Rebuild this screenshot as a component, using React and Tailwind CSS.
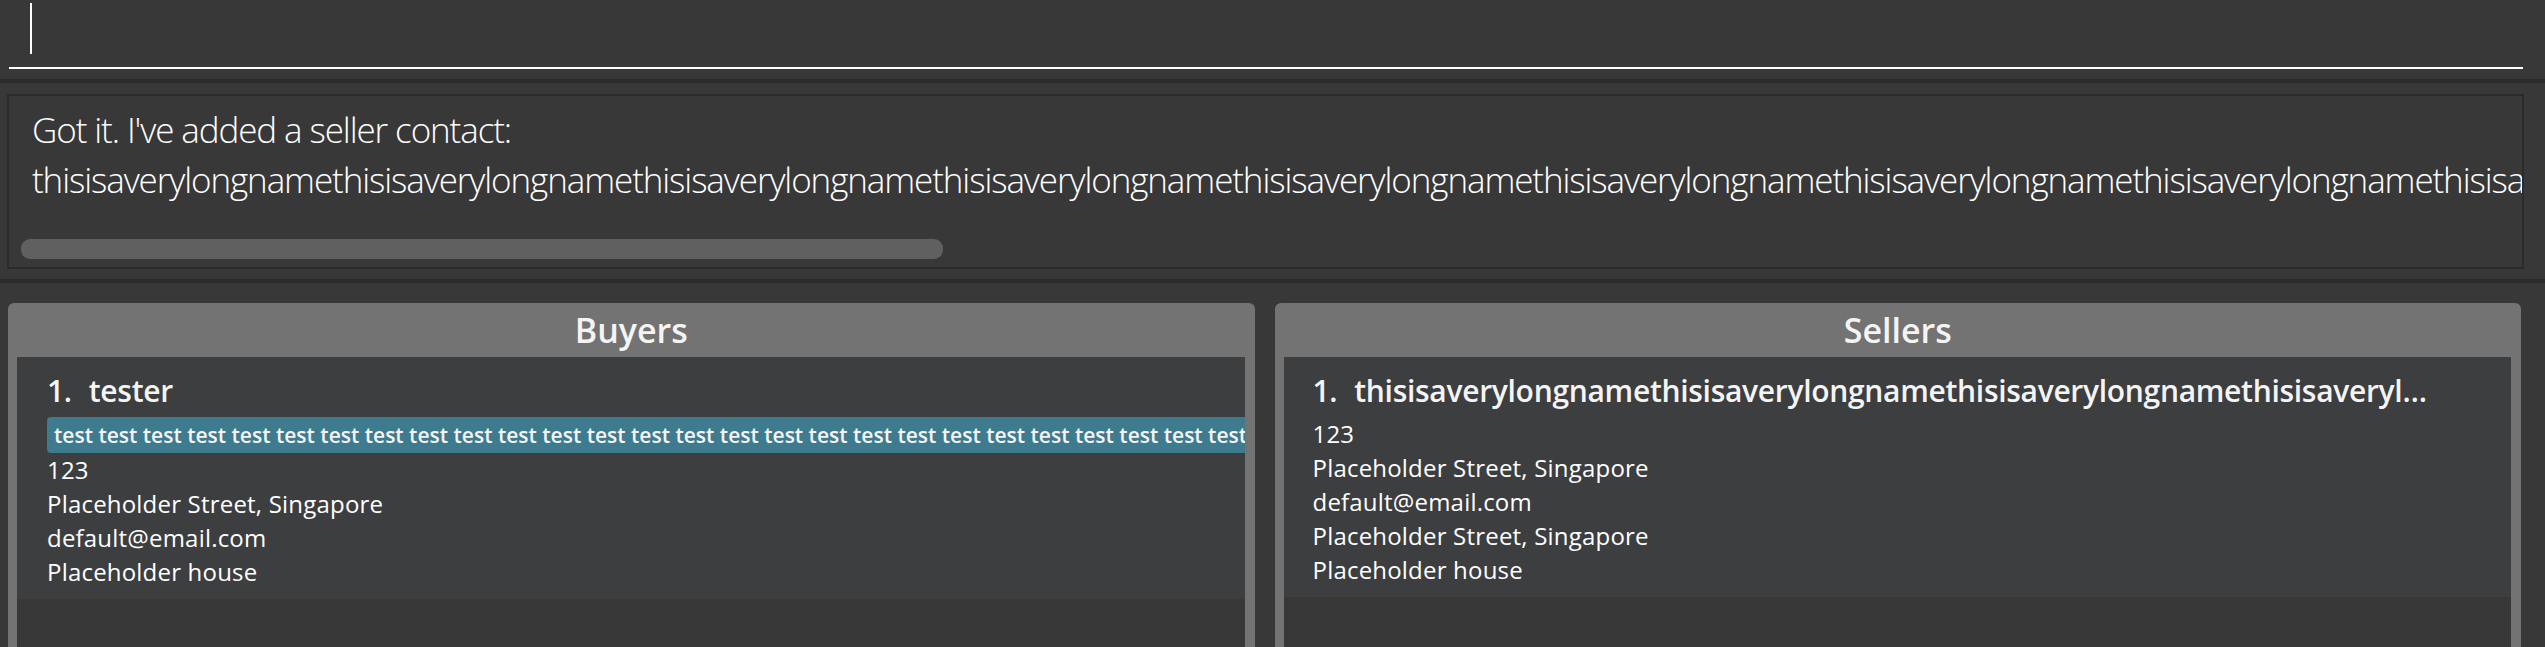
import React from "react";

const longName = "thisisaverylongname".repeat(12);
const tags = Array(40).fill("test").join(" ");

const Panel = ({ title, children }) => (
  <div className="flex-1 min-w-0 flex flex-col bg-[#737373] rounded-t-[6px]">
    <div className="h-[54px] shrink-0 flex items-center justify-center text-[34px] font-semibold text-[#f4f4f4]">
      {title}
    </div>
    <div className="flex-1 ml-[9px] mr-[10px] bg-[#383838] overflow-hidden">{children}</div>
  </div>
);

const Line = ({ children }) => (
  <div className="h-[34px] leading-[34px] text-[24px] tracking-[0.2px] text-white whitespace-nowrap">{children}</div>
);

export default function App() {
  return (
    <div className="w-full h-[647px] bg-[#383838] overflow-hidden flex flex-col font-['Open_Sans',sans-serif]">
      {/* Command box */}
      <div className="h-[79px] shrink-0 pt-[3px] pl-[9px] pr-[22px]">
        <div className="h-[66px] border-b-2 border-white pl-[21px]">
          <div className="w-[2px] h-[51px] bg-white" />
        </div>
      </div>
      <div className="h-[4px] shrink-0 bg-[#2b2b2b]" />

      {/* Result display */}
      <div className="h-[196px] shrink-0 pt-[11px] pl-[7px] pr-[21px]">
        <div className="h-[175px] border-2 border-[#2b2b2b] overflow-hidden">
          <div className="pl-[23px] pt-[9px] font-light text-[35px] leading-[50px] tracking-[-1.1px] text-white whitespace-nowrap">
            <div>Got it. I've added a seller contact:</div>
            <div>{longName}</div>
          </div>
          <div className="ml-[12px] mt-[34px] w-[922px] h-[20px] rounded-[9px] bg-[#606060]" />
        </div>
      </div>
      <div className="h-[4px] shrink-0 bg-[#2b2b2b]" />

      {/* Lists */}
      <div className="flex-1 min-h-0 flex gap-[20px] pt-[20px] pl-[8px] pr-[24px]">
        <Panel title="Buyers">
          <div className="bg-[#3d3e40] pt-[13px] pb-[10px] pl-[30px] overflow-hidden">
            <div className="h-[42px] leading-[42px] text-[30px] tracking-[-0.3px] font-semibold text-[#f4f4f4] whitespace-nowrap">
              <span>1.</span>
              <span className="ml-[17px]">tester</span>
            </div>
            <div className="mt-[5px] h-[36px] w-max rounded-l-[4px] bg-[#3e7b8f] pl-[7px] pr-[7px] leading-[36px] text-[21px] font-semibold text-[#f4f4f4] whitespace-nowrap">
              {tags}
            </div>
            <Line>123</Line>
            <Line>Placeholder Street, Singapore</Line>
            <Line>default@email.com</Line>
            <Line>Placeholder house</Line>
          </div>
        </Panel>
        <Panel title="Sellers">
          <div className="bg-[#3d3e40] pt-[13px] pb-[10px] pl-[29px] pr-[78px] overflow-hidden">
            <div className="h-[42px] leading-[42px] text-[30px] tracking-[-0.3px] font-semibold text-[#f4f4f4] truncate">
              <span>1.</span>
              <span className="ml-[17px]">{longName}</span>
            </div>
            <div className="mt-[5px]" />
            <Line>123</Line>
            <Line>Placeholder Street, Singapore</Line>
            <Line>default@email.com</Line>
            <Line>Placeholder Street, Singapore</Line>
            <Line>Placeholder house</Line>
          </div>
        </Panel>
      </div>
    </div>
  );
}
